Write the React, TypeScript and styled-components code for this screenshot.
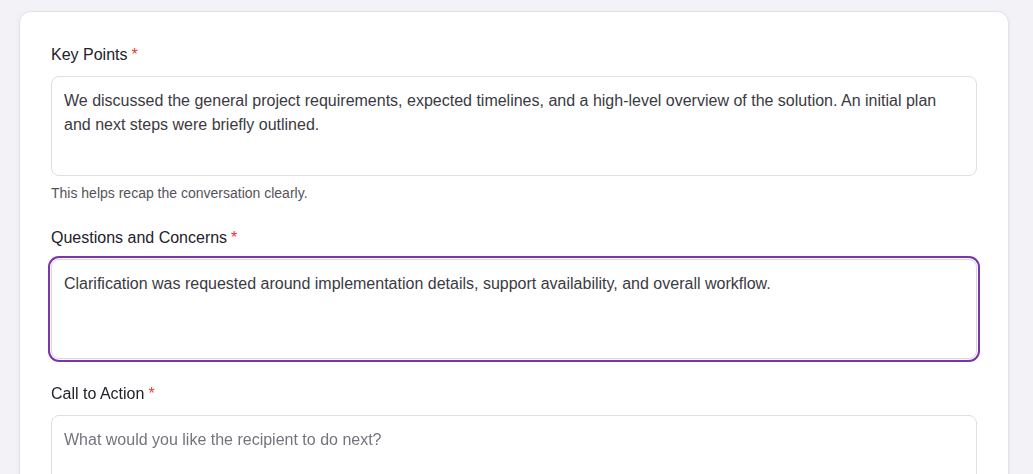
import React, { useEffect, useRef } from 'react';
import styled, { createGlobalStyle } from 'styled-components';

const GlobalStyle = createGlobalStyle`
  html, body {
    margin: 0;
    padding: 0;
    background: #f3f2f6;
    font-family: "Liberation Sans", Arial, sans-serif;
  }
`;

const Page = styled.div`
  padding: 11px 24px 0 19px;
  height: 474px;
  box-sizing: border-box;
  overflow: hidden;
`;

const Card = styled.div`
  background: #fff;
  border: 1px solid #e4e1ea;
  border-radius: 12px;
  box-shadow: 0 1px 4px rgba(60, 40, 90, 0.06);
  padding: 33px 31px 40px;
  display: flex;
  flex-direction: column;
  gap: 25px;
`;

const Field = styled.div`
  display: flex;
  flex-direction: column;
`;

const Label = styled.label`
  font-size: 16px;
  line-height: 20px;
  color: #232129;
  margin-bottom: 11px;
`;

const Required = styled.span`
  color: #e53935;
  margin-left: 4px;
`;

const TextArea = styled.textarea<{ $focused?: boolean }>`
  display: block;
  box-sizing: border-box;
  width: 100%;
  height: 100px;
  resize: none;
  padding: 12px;
  font-family: "Liberation Sans", Arial, sans-serif;
  font-size: 16px;
  line-height: 24px;
  color: #3b3a42;
  caret-color: #1f1d24;
  background: #fff;
  border: 1px solid ${({ $focused }) => ($focused ? '#ddd3e8' : '#e3dbe6')};
  border-radius: 8px;
  outline: ${({ $focused }) => ($focused ? '2px solid #7a35a8' : 'none')};
  outline-offset: 1px;

  &::placeholder {
    color: #75737c;
  }

  &:focus {
    outline: 2px solid #7a35a8;
  }
`;

const Help = styled.div`
  font-size: 14px;
  line-height: 20px;
  color: #55535b;
  margin-top: 7px;
`;

const App = () => {
  const activeRef = useRef<HTMLTextAreaElement>(null);

  useEffect(() => {
    const el = activeRef.current;
    if (el) {
      el.focus();
      el.setSelectionRange(el.value.length, el.value.length);
    }
  }, []);

  return (
    <>
      <GlobalStyle />
      <Page>
        <Card>
          <Field>
            <Label>
              Key Points<Required>*</Required>
            </Label>
            <TextArea defaultValue="We discussed the general project requirements, expected timelines, and a high-level overview of the solution. An initial plan and next steps were briefly outlined." />
            <Help>This helps recap the conversation clearly.</Help>
          </Field>

          <Field>
            <Label>
              Questions and Concerns<Required>*</Required>
            </Label>
            <TextArea
              ref={activeRef}
              $focused
              defaultValue="Clarification was requested around implementation details, support availability, and overall workflow."
            />
          </Field>

          <Field>
            <Label>
              Call to Action<Required>*</Required>
            </Label>
            <TextArea placeholder="What would you like the recipient to do next?" />
          </Field>
        </Card>
      </Page>
    </>
  );
};

export default App;
